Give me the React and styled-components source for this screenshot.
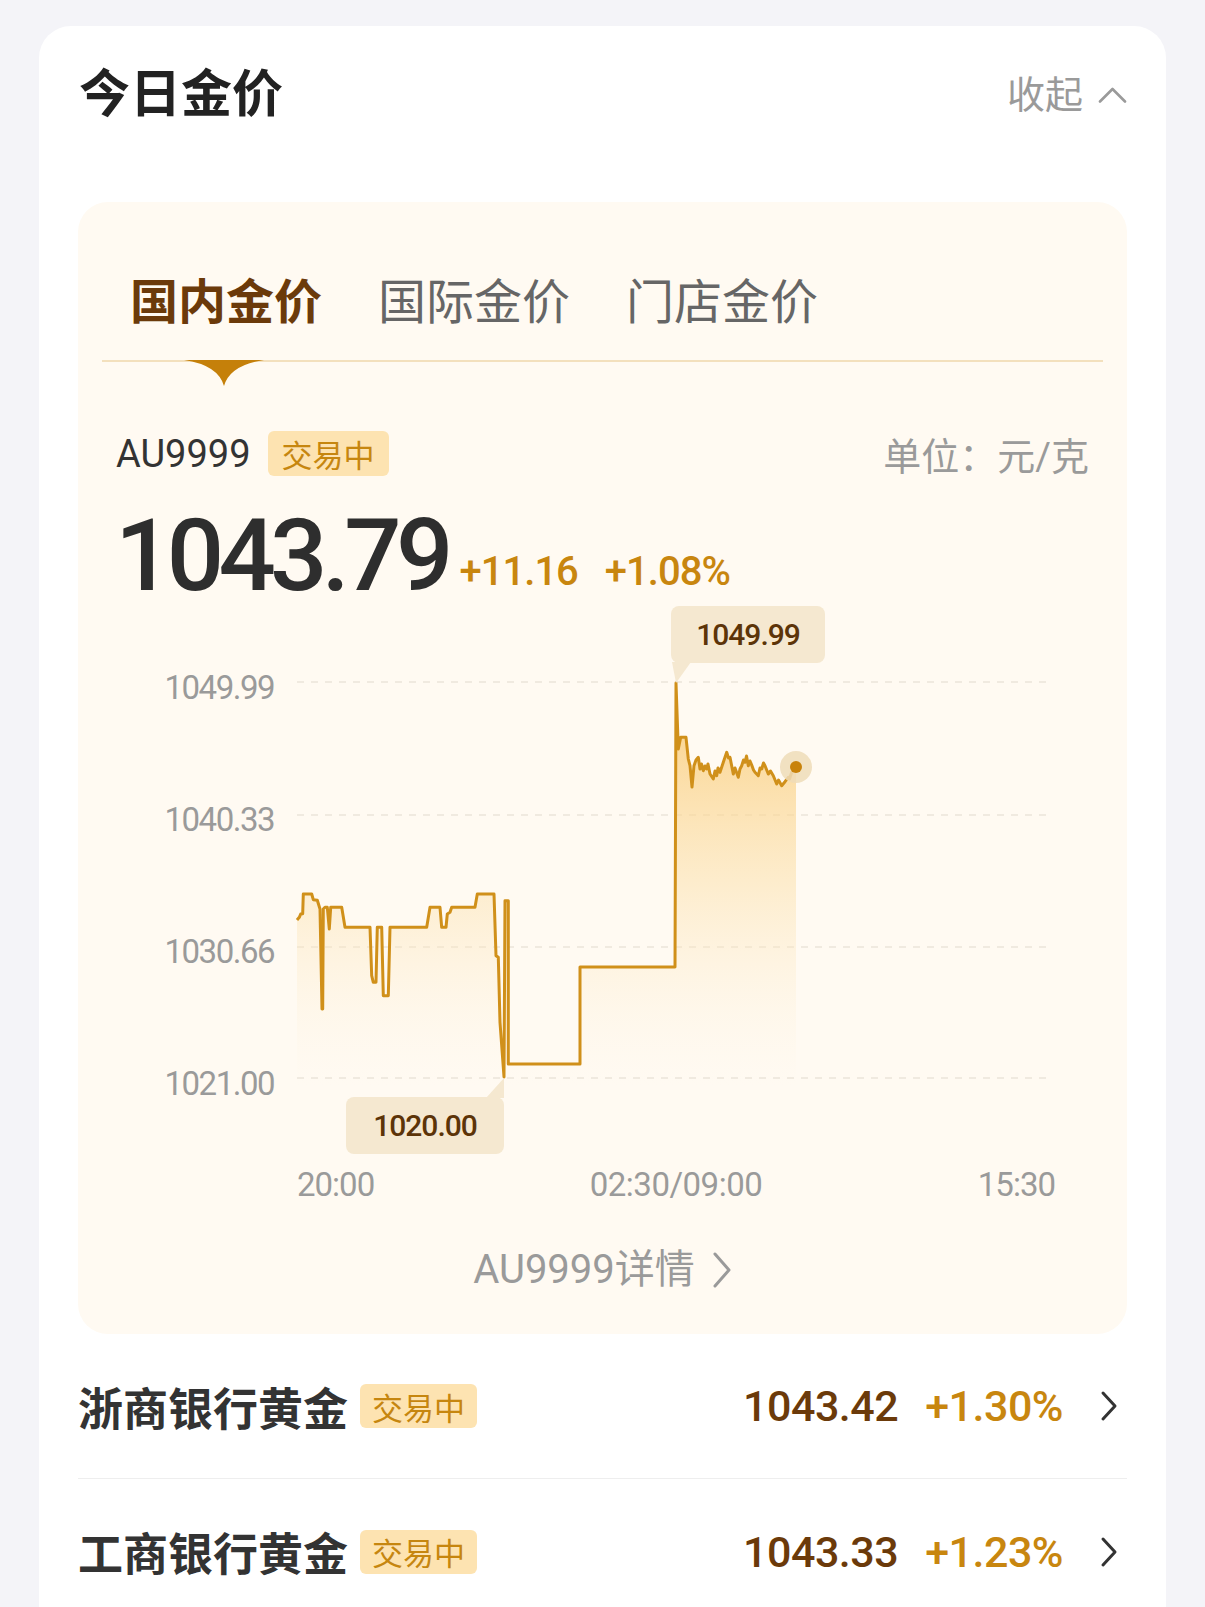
import React from "react";
import styled, { createGlobalStyle } from "styled-components";

const GlobalStyle = createGlobalStyle`
  html, body { margin: 0; padding: 0; background: #f4f4f8; }
  body {
    font-family: Roboto, "Noto Sans CJK SC", sans-serif;
    -webkit-font-smoothing: antialiased;
  }
  * { box-sizing: border-box; }
`;

const Page = styled.div`
  width: 1205px;
  padding: 26px 39px 0 39px;
`;

const Card = styled.section`
  background: #ffffff;
  border-radius: 32px 32px 0 0;
  padding: 44px 39px 60px;
`;

const Header = styled.header`
  display: flex;
  align-items: center;
  justify-content: space-between;
  height: 50px;
  padding-left: 1px;
`;

const Title = styled.h1`
  margin: 0;
  font-size: 51px;
  line-height: 50px;
  font-weight: 700;
  color: #222222;
`;

const Collapse = styled.div`
  display: flex;
  align-items: center;
  gap: 15px;
  font-size: 38px;
  line-height: 50px;
  color: #9a9a9a;
`;

const Panel = styled.div`
  margin-top: 82px;
  background: #fffaf2;
  border-radius: 30px;
  padding: 71px 24px 39px;
`;

const TabBar = styled.nav`
  display: flex;
  gap: 56px;
  padding-left: 28px;
  border-bottom: 2px solid #f3e0bd;
`;

const Tab = styled.div`
  position: relative;
  font-size: 48px;
  line-height: 60px;
  padding-bottom: 27px;
  font-weight: ${(p) => (p.$active ? 700 : 400)};
  color: ${(p) => (p.$active ? "#6b3a0a" : "#666666")};
`;

const Indicator = styled.svg`
  position: absolute;
  top: 100%;
  left: calc(50% - 42px);
  width: 80px;
  height: 27px;
`;

const Body = styled.div`
  padding: 0 14px;
`;

const InfoRow = styled.div`
  margin-top: 69px;
  display: flex;
  align-items: center;
  height: 45px;
`;

const Code = styled.span`
  font-size: 38px;
  color: #333333;
`;

const Badge = styled.span`
  display: inline-flex;
  align-items: center;
  height: ${(p) => p.$h || 45}px;
  margin-left: ${(p) => p.$gap || 17}px;
  padding: 0 ${(p) => p.$pad || 14}px;
  border-radius: 6px;
  background: #fde3b1;
  color: #c6860f;
  font-size: 31px;
`;

const Unit = styled.span`
  margin-left: auto;
  font-size: 38px;
  color: #9a9a9a;
`;

const PriceRow = styled.div`
  margin-top: 30px;
  display: flex;
  align-items: flex-end;
`;

const BigPrice = styled.span`
  font-size: 101px;
  line-height: 100px;
  font-weight: 500;
  letter-spacing: -5.7px;
  color: #2e2e2e;
  margin-left: -1px;
`;

const Change = styled.span`
  margin-left: ${(p) => p.$gap}px;
  margin-bottom: 14px;
  font-size: 40px;
  line-height: 40px;
  font-weight: 500;
  letter-spacing: -1px;
  color: #c8860f;
`;

const ChartArea = styled.div`
  display: grid;
  grid-template-columns: 158px 753px;
  column-gap: 23px;
`;

const YAxis = styled.div`
  display: flex;
  flex-direction: column;
  align-items: flex-end;
  padding-top: 62px;
  gap: 92px;
`;

const AxisLabel = styled.span`
  font-size: 33px;
  line-height: 40px;
  letter-spacing: ${(p) => p.$ls ?? -1.5}px;
  color: #9a9a9a;
`;

const Plot = styled.div`
  position: relative;
  width: 753px;
  height: 480px;
`;

const PlotSvg = styled.svg`
  display: block;
  overflow: visible;
`;

const Tip = styled.div`
  position: absolute;
  left: ${(p) => p.$x}px;
  top: ${(p) => p.$y}px;
  width: ${(p) => p.$w}px;
  height: 57px;
  display: flex;
  align-items: center;
  justify-content: center;
  background: #f5e8d0;
  border-radius: 8px;
  font-size: 30px;
  font-weight: 500;
  letter-spacing: -1px;
  color: #5c3408;
`;

const XAxis = styled.div`
  margin-left: 181px;
  margin-top: 61px;
  width: 758px;
  display: flex;
  justify-content: space-between;
`;

const DetailLink = styled.div`
  margin-top: 40px;
  display: flex;
  justify-content: center;
  align-items: center;
  gap: 17px;
  font-size: 40px;
  line-height: 50px;
  color: #9a9a9a;
`;

const Row = styled.div`
  display: flex;
  align-items: center;
  height: 145px;
  padding-right: 9px;
  border-bottom: ${(p) => (p.$last ? "none" : "1px solid #eeeeee")};
`;

const BankName = styled.span`
  font-size: 45px;
  font-weight: 700;
  color: #333333;
`;

const RowPrice = styled.span`
  margin-left: auto;
  font-size: 43px;
  font-weight: 500;
  letter-spacing: -0.5px;
  color: #6b3a0a;
`;

const RowPct = styled.span`
  margin-left: 27px;
  font-size: 43px;
  font-weight: 500;
  letter-spacing: -0.5px;
  color: #c8860f;
`;

const RowChevron = styled.svg`
  margin-left: 37px;
  width: 18px;
  height: 32px;
`;

const pts = [
  [0, 314], [2.3, 311.3], [3.7, 308], [5.7, 307.7], [6.3, 288], [14.7, 288],
  [16.3, 293.7], [20.3, 294.3], [23, 303], [25, 403], [25.7, 403], [26.3, 303],
  [28, 301.3], [30.3, 301.3], [32.3, 323], [33.7, 301.3], [44.7, 301.3], [48, 321.3],
  [73, 321.3], [74.7, 369.7], [76.3, 376.3], [79, 376.3], [80.3, 321.3], [84.7, 321.3],
  [86.3, 389.7], [91.3, 389.7], [93, 321.3], [129.7, 321.3], [133, 301.3], [143, 301.3],
  [144.7, 321.3], [149, 321.3], [150.3, 308], [153, 306.3], [154.7, 301.3], [178, 301.3],
  [180.3, 288], [197, 288], [199, 349.7], [201.3, 351.3], [203, 416.3], [207, 471],
  [208, 294.7], [211.3, 294.7], [211.3, 458], [283, 458], [283, 361], [378, 361],
  [379, 77], [381.3, 143], [383.7, 131.3], [389, 131.3], [391.3, 153], [393, 159.7],
  [395, 181], [397, 159.7], [399, 154], [401.3, 151.3], [403, 163], [404.5, 158],
  [406.3, 164.7], [408, 160], [409.7, 163], [411, 158], [413, 168], [416.3, 173],
  [418, 165], [419.7, 169.7], [421, 162], [423, 166.3], [426.3, 156.3], [429.7, 146.3],
  [431.5, 152], [433, 151.3], [436.3, 168], [438, 162], [441.3, 171.3], [443, 163],
  [444.7, 159.7], [446.5, 154], [448, 156.3], [449.5, 150], [451.3, 159.7], [453, 155],
  [454.7, 159], [456.5, 164], [458, 166.3], [461.3, 169.7], [463, 162], [464.7, 163],
  [466.5, 157], [468, 159.7], [471.3, 168], [473.5, 165], [476.3, 169.7], [479.7, 178],
  [481.5, 174], [484.7, 179.7], [488, 175.7], [491.3, 171.3], [492.5, 173], [494.7, 166.3],
  [497, 164], [499, 161],
];

const linePath = pts.map((p, i) => `${i ? "L" : "M"}${p[0]} ${p[1]}`).join(" ");
const areaPath = `${linePath} L499 480 L0 480 Z`;
const gridY = [76, 209, 341, 472];

function Chart() {
  return (
    <Plot>
      <PlotSvg width="753" height="480" viewBox="0 0 753 480">
        <defs>
          <linearGradient id="areaFill" gradientUnits="userSpaceOnUse" x1="0" y1="77" x2="0" y2="480">
            <stop offset="0" stopColor="#f9c66a" stopOpacity="0.85" />
            <stop offset="0.5" stopColor="#fbdfa8" stopOpacity="0.5" />
            <stop offset="1" stopColor="#fdf1dc" stopOpacity="0" />
          </linearGradient>
        </defs>
        {gridY.map((y) => (
          <line key={y} x1="0" x2="753" y1={y} y2={y} stroke="#ece5da" strokeWidth="1.5" strokeDasharray="7 7" />
        ))}
        <path d={areaPath} fill="url(#areaFill)" />
        <path d={linePath} fill="none" stroke="#d0901a" strokeWidth="3" strokeLinejoin="round" />
        <polygon points="375,56 394,56 379,77" fill="#f5e8d0" />
        <polygon points="189,492 207,492 207,472" fill="#f5e8d0" />
        <circle cx="499" cy="161" r="16" fill="#eedcb9" opacity="0.85" />
        <circle cx="499" cy="161" r="6" fill="#c8820a" />
      </PlotSvg>
      <Tip $x={374} $y={0} $w={154}>1049.99</Tip>
      <Tip $x={49} $y={491} $w={158}>1020.00</Tip>
    </Plot>
  );
}

export default function App() {
  return (
    <>
      <GlobalStyle />
      <Page>
        <Card>
          <Header>
            <Title>今日金价</Title>
            <Collapse>
              收起
              <svg width="29" height="16" viewBox="0 0 29 16">
                <path d="M2 14.5 L14.5 2 L27 14.5" fill="none" stroke="#9a9a9a" strokeWidth="2.6" strokeLinecap="round" strokeLinejoin="round" />
              </svg>
            </Collapse>
          </Header>

          <Panel>
            <TabBar>
              <Tab $active>
                国内金价
                <Indicator viewBox="0 0 80 27">
                  <path d="M0 0 H80 Q46 5 40 26 Q34 5 0 0 Z" fill="#c5800a" />
                </Indicator>
              </Tab>
              <Tab>国际金价</Tab>
              <Tab>门店金价</Tab>
            </TabBar>

            <Body>
              <InfoRow>
                <Code>AU9999</Code>
                <Badge>交易中</Badge>
                <Unit>单位：元/克</Unit>
              </InfoRow>

              <PriceRow>
                <BigPrice>1043.79</BigPrice>
                <Change $gap={12}>+11.16</Change>
                <Change $gap={27}>+1.08%</Change>
              </PriceRow>

              <ChartArea>
                <YAxis>
                  <AxisLabel>1049.99</AxisLabel>
                  <AxisLabel>1040.33</AxisLabel>
                  <AxisLabel>1030.66</AxisLabel>
                  <AxisLabel>1021.00</AxisLabel>
                </YAxis>
                <Chart />
              </ChartArea>

              <XAxis>
                <AxisLabel $ls={-1}>20:00</AxisLabel>
                <AxisLabel $ls={-0.5}>02:30/09:00</AxisLabel>
                <AxisLabel $ls={-1}>15:30</AxisLabel>
              </XAxis>

              <DetailLink>
                <span>AU9999详情</span>
                <svg width="20" height="38" viewBox="0 0 20 38">
                  <path d="M3 3 L17 19 L3 35" fill="none" stroke="#9a9a9a" strokeWidth="3" strokeLinecap="round" strokeLinejoin="round" />
                </svg>
              </DetailLink>
            </Body>
          </Panel>

          <Row>
            <BankName>浙商银行黄金</BankName>
            <Badge $gap={12} $h={44} $pad={12}>交易中</Badge>
            <RowPrice>1043.42</RowPrice>
            <RowPct>+1.30%</RowPct>
            <RowChevron viewBox="0 0 18 32">
              <path d="M3 3 L15 16 L3 29" fill="none" stroke="#333333" strokeWidth="3" strokeLinecap="round" strokeLinejoin="round" />
            </RowChevron>
          </Row>
          <Row $last>
            <BankName>工商银行黄金</BankName>
            <Badge $gap={12} $h={44} $pad={12}>交易中</Badge>
            <RowPrice>1043.33</RowPrice>
            <RowPct>+1.23%</RowPct>
            <RowChevron viewBox="0 0 18 32">
              <path d="M3 3 L15 16 L3 29" fill="none" stroke="#333333" strokeWidth="3" strokeLinecap="round" strokeLinejoin="round" />
            </RowChevron>
          </Row>
        </Card>
      </Page>
    </>
  );
}
